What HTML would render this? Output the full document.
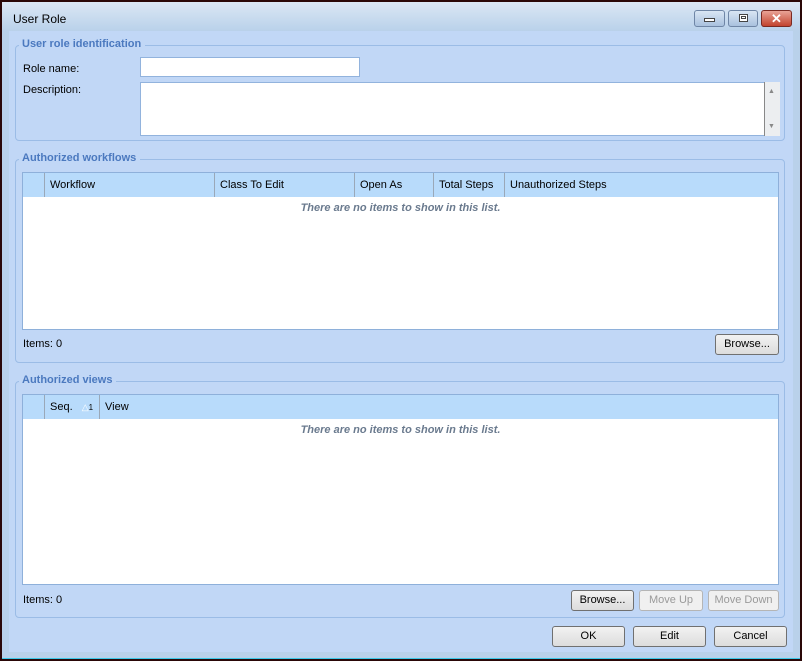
<!DOCTYPE html>
<html><head><style>
*{box-sizing:border-box;margin:0;padding:0}
body{width:802px;height:661px;background:#2a0808;font-family:"Liberation Sans",sans-serif;font-size:11px;color:#000;position:relative;overflow:hidden}
.a{position:absolute}
.frame{left:2px;top:2px;width:798px;height:657px;background:#b9d1ea;border-bottom:1px solid #3cc8e8}
.title{left:2px;top:2px;width:798px;height:29px;background:linear-gradient(#dbe7f4,#b9d1ea)}
.client{left:9px;top:31px;width:784px;height:621px;background:#c1d7f6}
.fs{border:1px solid #9bbce6;border-radius:4px}
.lg{font-weight:bold;color:#4b79bf;font-size:11px;background:#c1d7f6;padding:0 4px 0 3px}
.inp{background:#fff;border:1px solid #92b3dd}
.grid{background:#fff;border:1px solid #8eb0da}
.hdr{background:#b8dbfb;height:24px;left:0;top:0;right:0}
.hc{top:0;height:24px;border-left:1px solid #9aa8b8;padding:6px 5px;white-space:nowrap}
.empty{left:0;right:0;text-align:center;font-style:italic;font-weight:bold;color:#6a7a8e}
.btn{border:1px solid #707070;border-radius:3px;background:linear-gradient(#f2f2f2,#dcdcdc);text-align:center;line-height:19px}
.dis{border-color:#b5b5b5;color:#9a9a9a;background:#f0f0f0}
.wb{top:10px;height:17px;border:1px solid #6f86a6;border-radius:3px;background:linear-gradient(#d9e6f4,#a9c1de)}
</style></head><body>
<div class="a frame"></div>
<div class="a title"></div>
<div class="a" style="left:13px;top:12px;font-size:12px">User Role</div>
<div class="a wb" style="left:694px;width:31px"><div class="a" style="left:9px;top:7px;width:11px;height:4px;border:1px solid #444;background:#fff"></div></div>
<div class="a wb" style="left:728px;width:30px"><div class="a" style="left:10px;top:3px;width:9px;height:8px;border:1px solid #444;background:#fff"></div><div class="a" style="left:12px;top:5px;width:5px;height:3px;border:1px solid #444"></div></div>
<div class="a wb" style="left:761px;width:31px;background:linear-gradient(#e9a396,#c2432e);border-color:#7a2a22;color:#fff;font-weight:bold;font-size:13px;text-align:center;line-height:15px">✕</div>
<div class="a client"></div>

<div class="a fs" style="left:15px;top:45px;width:770px;height:96px"></div>
<div class="a lg" style="left:19px;top:38px">User role identification</div>
<div class="a" style="left:23px;top:63px">Role name:</div>
<div class="a inp" style="left:140px;top:57px;width:220px;height:20px"></div>
<div class="a" style="left:23px;top:84px">Description:</div>
<div class="a inp" style="left:140px;top:82px;width:625px;height:54px"></div>
<div class="a" style="left:764px;top:82px;width:16px;height:54px;background:#eceef0;border-left:1px solid #888"></div>
<div class="a" style="left:768px;top:88px;color:#888;font-size:7px">▲</div>
<div class="a" style="left:768px;top:123px;color:#888;font-size:7px">▼</div>

<div class="a fs" style="left:15px;top:159px;width:770px;height:204px"></div>
<div class="a lg" style="left:19px;top:152px">Authorized workflows</div>
<div class="a grid" style="left:22px;top:172px;width:757px;height:158px">
 <div class="a hdr">
  <div class="a hc" style="left:21px;width:170px">Workflow</div>
  <div class="a hc" style="left:191px;width:140px">Class To Edit</div>
  <div class="a hc" style="left:331px;width:79px">Open As</div>
  <div class="a hc" style="left:410px;width:71px">Total Steps</div>
  <div class="a hc" style="left:481px;width:200px">Unauthorized Steps</div>
 </div>
 <div class="a empty" style="top:29px">There are no items to show in this list.</div>
</div>
<div class="a" style="left:23px;top:338px">Items: 0</div>
<div class="a btn" style="left:715px;top:334px;width:64px;height:21px">Browse...</div>

<div class="a fs" style="left:15px;top:381px;width:770px;height:237px"></div>
<div class="a lg" style="left:19px;top:374px">Authorized views</div>
<div class="a grid" style="left:22px;top:394px;width:757px;height:191px">
 <div class="a hdr">
  <div class="a hc" style="left:21px;width:55px">Seq. <span style="color:#fff;font-size:9px;margin-left:6px">△</span><span style="font-size:8px">1</span></div>
  <div class="a hc" style="left:76px;width:100px">View</div>
 </div>
 <div class="a empty" style="top:29px">There are no items to show in this list.</div>
</div>
<div class="a" style="left:23px;top:594px">Items: 0</div>
<div class="a btn" style="left:571px;top:590px;width:63px;height:21px">Browse...</div>
<div class="a btn dis" style="left:639px;top:590px;width:64px;height:21px">Move Up</div>
<div class="a btn dis" style="left:708px;top:590px;width:71px;height:21px">Move Down</div>

<div class="a btn" style="left:552px;top:626px;width:73px;height:21px">OK</div>
<div class="a btn" style="left:633px;top:626px;width:73px;height:21px">Edit</div>
<div class="a btn" style="left:714px;top:626px;width:73px;height:21px">Cancel</div>
</body></html>
